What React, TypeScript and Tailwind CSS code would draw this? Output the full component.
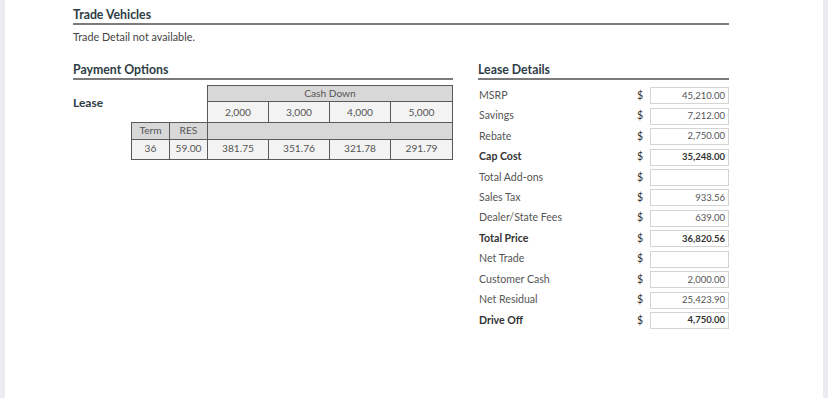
import React from 'react';

/* Lease worksheet: trade summary, payment grid and lease detail figures */

const cashDown = ['2,000', '3,000', '4,000', '5,000'];
const payments = ['381.75', '351.76', '321.78', '291.79'];

const leaseRows: { label: string; value: string; bold?: boolean }[] = [
  { label: 'MSRP', value: '45,210.00' },
  { label: 'Savings', value: '7,212.00' },
  { label: 'Rebate', value: '2,750.00' },
  { label: 'Cap Cost', value: '35,248.00', bold: true },
  { label: 'Total Add-ons', value: '' },
  { label: 'Sales Tax', value: '933.56' },
  { label: 'Dealer/State Fees', value: '639.00' },
  { label: 'Total Price', value: '36,820.56', bold: true },
  { label: 'Net Trade', value: '' },
  { label: 'Customer Cash', value: '2,000.00' },
  { label: 'Net Residual', value: '25,423.90' },
  { label: 'Drive Off', value: '4,750.00', bold: true },
];

function SectionTitle({ children }: { children: React.ReactNode }) {
  return (
    <div className="h-[19px] border-b-2 border-[#7b7b7b] text-[12.3px] leading-[17px] font-bold text-[#2e3d45]">
      {children}
    </div>
  );
}

const cell = 'border border-[#5a5a5a] text-center p-0';

export default function App() {
  return (
    <div className="h-[398px] bg-[#ebebf2] px-[5px] font-['Lato',sans-serif] text-[#555]">
      <div className="h-full bg-white pl-[68px] pt-[6px]">
        <div className="w-[656px]">
          <SectionTitle>Trade Vehicles</SectionTitle>
          <div className="mt-[5px] text-[10.8px] leading-[14px] text-[#444]">Trade Detail not available.</div>

          <div className="mt-[17px] flex gap-[25px]">
            {/* Payment options */}
            <div className="w-[380px]">
              <SectionTitle>Payment Options</SectionTitle>
              <div className="mt-[5px] flex">
                <div className="w-[58px] pt-[11px] text-[12px] leading-[14px] font-bold text-[#2e3d45]">Lease</div>
                <table className="border-collapse text-[10.2px] text-[#555]">
                  <colgroup>
                    <col className="w-[38px]" />
                    <col className="w-[38px]" />
                    <col className="w-[61px]" />
                    <col className="w-[61px]" />
                    <col className="w-[61px]" />
                    <col className="w-[62px]" />
                  </colgroup>
                  <tbody>
                    <tr className="h-[16px]">
                      <td colSpan={2} className="p-0" />
                      <td colSpan={4} className={`${cell} bg-[#d8d8d8]`}>Cash Down</td>
                    </tr>
                    <tr className="h-[21px]">
                      <td colSpan={2} className="p-0" />
                      {cashDown.map((c) => (
                        <td key={c} className={`${cell} bg-[#f3f3f3]`}>{c}</td>
                      ))}
                    </tr>
                    <tr className="h-[15px]">
                      <td className={`${cell} bg-[#d8d8d8]`}>Term</td>
                      <td className={`${cell} bg-[#d8d8d8]`}>RES</td>
                      <td colSpan={4} className={`${cell} bg-[#d8d8d8]`} />
                    </tr>
                    <tr className="h-[20px]">
                      <td className={`${cell} bg-[#f3f3f3]`}>36</td>
                      <td className={`${cell} bg-[#f3f3f3]`}>59.00</td>
                      {payments.map((p) => (
                        <td key={p} className={`${cell} bg-[#f3f3f3]`}>{p}</td>
                      ))}
                    </tr>
                  </tbody>
                </table>
              </div>
            </div>

            {/* Lease details */}
            <div className="w-[251px]">
              <SectionTitle>Lease Details</SectionTitle>
              <div className="mt-[5.5px]">
                {leaseRows.map((r) => (
                  <div key={r.label} className="flex h-[20.45px] items-center text-[10.6px]">
                    <span className={`w-[159px] pl-[1px] ${r.bold ? 'font-bold text-[#333]' : ''}`}>{r.label}</span>
                    <span className="w-[13px] text-[#333]">$</span>
                    <span
                      className={`flex h-[17px] w-[79px] items-center justify-end border border-[#d4d4d4] pr-[3px] text-[9.5px] ${
                        r.bold ? 'font-bold text-[#333]' : ''
                      }`}
                    >
                      {r.value}
                    </span>
                  </div>
                ))}
              </div>
            </div>
          </div>
        </div>
      </div>
    </div>
  );
}
